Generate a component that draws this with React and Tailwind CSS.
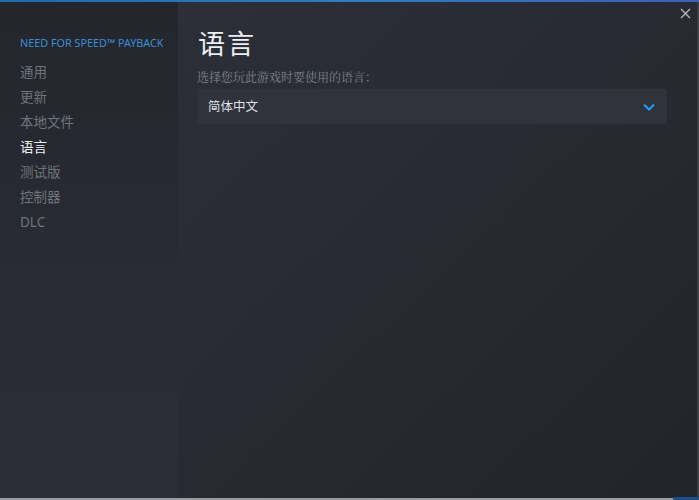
import React from "react";

const items = ["通用", "更新", "本地文件", "语言", "测试版", "控制器", "DLC"];

export default function App() {
  return (
    <div
      className="w-[699px] h-[500px] relative overflow-hidden flex flex-col bg-[#24262d]"
      style={{ fontFamily: '"Noto Sans", "Noto Sans CJK SC", sans-serif' }}
    >
      <div className="h-[2px] w-full bg-gradient-to-r from-[#1a6ea8] via-[#2a7fc0] to-[#3b5fb8]" />
      <div className="flex flex-1 min-h-0">
        <div className="w-[178px] shrink-0 bg-gradient-to-b from-[#24262d] via-[#282b33] to-[#2b2e37] pt-[32px] pl-[20px]">
          <div className="text-[10.8px] text-[#3d8ed6] leading-[18px] mb-[8px]">
            NEED FOR SPEED™ PAYBACK
          </div>
          <div className="flex flex-col">
            {items.map((t) => (
              <div
                key={t}
                className={
                  "h-[25px] text-[13.5px] leading-[25px] " +
                  (t === "语言" ? "text-[#eef0f2]" : "text-[#70747b]")
                }
              >
                {t}
              </div>
            ))}
          </div>
        </div>
        <div className="flex-1 relative bg-gradient-to-br from-[#2c2f38] via-[#272a31] to-[#22242b] pl-[20px] pr-[32px] pt-[25px]">
          <button className="absolute right-[6px] top-[3px] w-[16px] h-[16px] flex items-center justify-center">
            <svg width="11" height="11" viewBox="0 0 11 11">
              <path d="M1 1L10 10M10 1L1 10" stroke="#b8bcc2" strokeWidth="1.3" />
            </svg>
          </button>
          <div className="text-[27px] leading-[34px] text-[#eceef0] tracking-[2px]">语言</div>
          <div
            className="text-[12px] leading-[16px] text-[#7f838b] mt-[8px] -ml-[1px]"
            style={{ fontFamily: '"Noto Serif CJK SC", "Noto Sans CJK SC", serif' }}
          >
            选择您玩此游戏时要使用的语言：
          </div>
          <div className="mt-[4px] h-[35px] bg-[#30333c] rounded-[2px] flex items-center justify-between pl-[10px] pr-[12px]">
            <span className="text-[12.5px] mt-[2px] text-[#dfe1e4]">简体中文</span>
            <svg width="12" height="8" viewBox="0 0 12 8">
              <path d="M1 1.5L6 6.5L11 1.5" stroke="#1a9fff" strokeWidth="2" fill="none" />
            </svg>
          </div>
        </div>
      </div>
      <div className="absolute right-0 top-[2px] bottom-0 w-[2px] bg-[#3a3d44]" />
      <div className="absolute left-0 right-[26px] bottom-0 h-[2px] bg-[#9a9ca0]" />
      <div className="absolute right-0 bottom-0 w-[26px] h-[3px] bg-[#1e4f86]" />
    </div>
  );
}
